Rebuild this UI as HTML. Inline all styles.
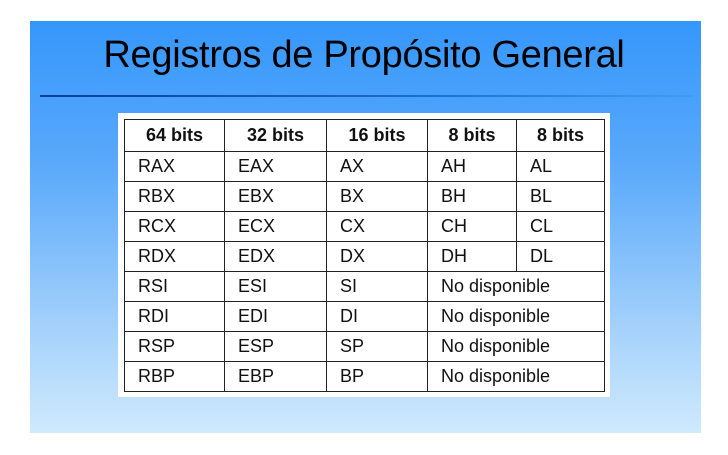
<!DOCTYPE html>
<html><head><meta charset="utf-8"><style>
body{margin:0;width:728px;height:455px;background:#fff;position:relative;overflow:hidden;font-family:"Liberation Sans",sans-serif}
.slide{position:absolute;left:30px;top:21px;width:671px;height:412px;background:linear-gradient(#3597fb 0%,#5aa9fb 35%,#a5d2fb 75%,#cfeafd 100%)}
h1{position:absolute;left:0;width:100%;top:34px;margin:0;text-align:center;font-weight:normal;font-size:38px;color:#000;letter-spacing:-0.3px}
.line{position:absolute;left:40px;top:95px;width:653px;height:2px;background:linear-gradient(90deg,#0a3d9a,#1a6fd0 60%,#3aa0f5)}
.wrap{position:absolute;left:118px;top:113px;width:492px;height:284px;background:#fff}
table{position:absolute;left:6px;top:6px;border-collapse:collapse;font-size:18px;color:#111}
td{border:1.5px solid #222;height:29px;padding:0 0 0 13px;line-height:29px}
th{border:1.5px solid #222;height:29px;font-weight:bold;font-size:18px}
</style></head><body>
<div class="slide"></div>
<h1>Registros de Propósito General</h1>
<div class="line"></div>
<div class="wrap"><table>
<colgroup><col style="width:100px"><col style="width:102px"><col style="width:101px"><col style="width:89px"><col style="width:88px"></colgroup>
<tr><th>64 bits</th><th>32 bits</th><th>16 bits</th><th>8 bits</th><th>8 bits</th></tr>
<tr><td>RAX</td><td>EAX</td><td>AX</td><td>AH</td><td>AL</td></tr>
<tr><td>RBX</td><td>EBX</td><td>BX</td><td>BH</td><td>BL</td></tr>
<tr><td>RCX</td><td>ECX</td><td>CX</td><td>CH</td><td>CL</td></tr>
<tr><td>RDX</td><td>EDX</td><td>DX</td><td>DH</td><td>DL</td></tr>
<tr><td>RSI</td><td>ESI</td><td>SI</td><td colspan="2">No disponible</td></tr>
<tr><td>RDI</td><td>EDI</td><td>DI</td><td colspan="2">No disponible</td></tr>
<tr><td>RSP</td><td>ESP</td><td>SP</td><td colspan="2">No disponible</td></tr>
<tr><td>RBP</td><td>EBP</td><td>BP</td><td colspan="2">No disponible</td></tr>
</table></div>
</body></html>
